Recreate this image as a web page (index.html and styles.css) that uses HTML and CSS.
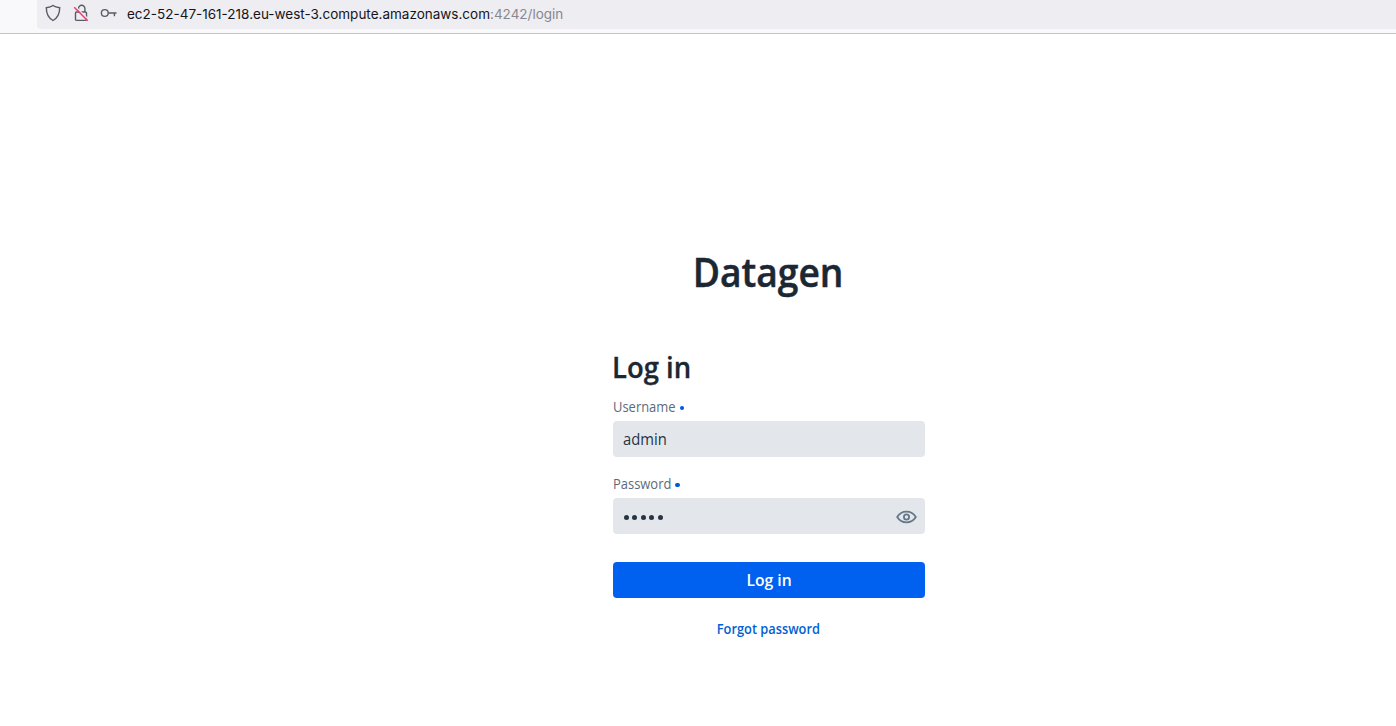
FILE: index.html
```html
<!DOCTYPE html>
<html lang="en">
<head>
<meta charset="utf-8">
<title>Datagen</title>
<link rel="stylesheet" href="styles.css">
</head>
<body>
<header class="toolbar">
  <div class="address">
    <svg class="icon" width="16" height="18" viewBox="0 0 16 18"><path d="M8 1.500C6.500 2.700 3.800 3.500 1.300 3.700c0 6 1.400 9.800 6.700 12.800 5.300-3 6.700-6.800 6.700-12.800C12.200 3.500 9.500 2.700 8 1.500z"/></svg>
    <svg class="icon lock" width="16" height="18" viewBox="0 0 16 18"><path d="M5.500 8V4.400a3.200 3.200 0 0 1 6.400 0V8M3.500 8h9a1 1 0 0 1 1 1v6.400a1 1 0 0 1-1 1h-9a1 1 0 0 1-1-1V9a1 1 0 0 1 1-1z"/><path class="gap" d="M2.200 2.200l13.500 13.500"/><path class="slash" d="M1.200 3.200l13.500 13.500"/></svg>
    <svg class="icon key" width="18" height="18" viewBox="0 0 18 18"><circle cx="4.800" cy="9" r="3.400"/><path d="M8.200 9H16.500M14.400 9v3.200"/></svg>
    <div class="url">ec2-52-47-161-218.eu-west-3.compute.amazonaws.com<span class="path">:4242/login</span></div>
  </div>
</header>
<main class="login">
  <h1 class="brand"><span>Datagen</span></h1>
  <h2 class="title"><span>Log in</span></h2>
  <label class="label"><span class="name">Username</span><i class="dot"></i></label>
  <div class="field"><span class="value">admin</span></div>
  <label class="label second"><span class="name">Password</span><i class="dot"></i></label>
  <div class="field">
    <div class="mask"><i></i><i></i><i></i><i></i><i></i></div>
    <svg class="eye" width="21" height="14" viewBox="0 0 21 14"><path d="M1.200 7C5.500-.1 15.500-.1 19.800 7 15.500 14.100 5.500 14.100 1.200 7z"/><circle cx="10.500" cy="7" r="2.600"/></svg>
  </div>
  <button class="submit"><span>Log in</span></button>
  <a class="forgot"><span>Forgot password</span></a>
</main>
</body>
</html>
```
FILE: styles.css
```css
* { box-sizing: border-box; }
body { margin: 0; height: 726px; overflow: hidden; background: #fff; font-family: "Open Sans", "Noto Sans", sans-serif; color: #1b2733; }
.toolbar { height: 34px; padding-left: 37px; background: #f9f9fb; border-bottom: 1px solid #c4c4c7; }
.address { display: flex; height: 29px; padding-left: 8px; background: #eeedf2; border-radius: 0 0 0 4px; }
.icon { flex: none; margin-top: 4px; fill: none; stroke: #5b5b66; stroke-width: 1.4; }
.lock { margin-left: 12px; }
.icon .gap { stroke: #eeedf2; }
.icon .slash { stroke: #f03e68; stroke-width: 1.5; }
.key { margin-left: 11px; }
.url { margin-left: 9px; font: 13.51px/28px Inter, sans-serif; color: #15141a; white-space: nowrap; }
.path { color: #88878f; }
.login { display: flex; flex-direction: column; width: 312px; margin-left: 613px; padding-top: 212px; white-space: nowrap; }
.login span { display: inline-block; }
.brand { margin: 0; font-size: 40px; font-weight: 600; line-height: 54px; text-align: center; -webkit-text-stroke: .5px #1b2733; }
.brand span { transform: translate(-1px, -1px) scaleX(.93); }
.title { margin: 51px 0 0; font-size: 28px; font-weight: 600; line-height: 32px; -webkit-text-stroke: .3px #1b2733; }
.title span { transform: translateX(-1px) scaleX(.98); transform-origin: left; }
.label { display: flex; align-items: center; height: 20px; margin-top: 14px; font-size: 14px; line-height: 20px; color: #5b6b7b; }
.name, .value { transform: scaleX(.925); transform-origin: left; }
.second { margin-top: 17px; }
.dot { width: 4.5px; height: 4.5px; margin: 2px 0 0 -1px; border-radius: 50%; background: #0057d9; }
.field { display: flex; align-items: center; justify-content: space-between; height: 36px; margin-top: 4px; padding: 0 8px 0 10px; border-radius: 4px; background: #e3e7eb; font-size: 16px; color: #273442; }
.mask { display: flex; gap: 3.4px; padding: 3px 0 0 1px; }
.mask i { width: 5px; height: 5px; border-radius: 50%; background: #273442; }
.eye { margin-top: 1px; fill: none; stroke: #65788a; stroke-width: 1.8; }
.submit { height: 36px; margin-top: 28px; padding: 0; border: 0; border-radius: 4px; background: #0061f0; color: #fff; font: 600 16px/36px "Open Sans", sans-serif; }
.submit span { transform: scaleX(.98); }
.forgot { margin-top: 21px; font-size: 14px; font-weight: 600; line-height: 20px; text-align: center; color: #0061d5; }
.forgot span { transform: translateX(-1px) scaleX(.915); }
```
